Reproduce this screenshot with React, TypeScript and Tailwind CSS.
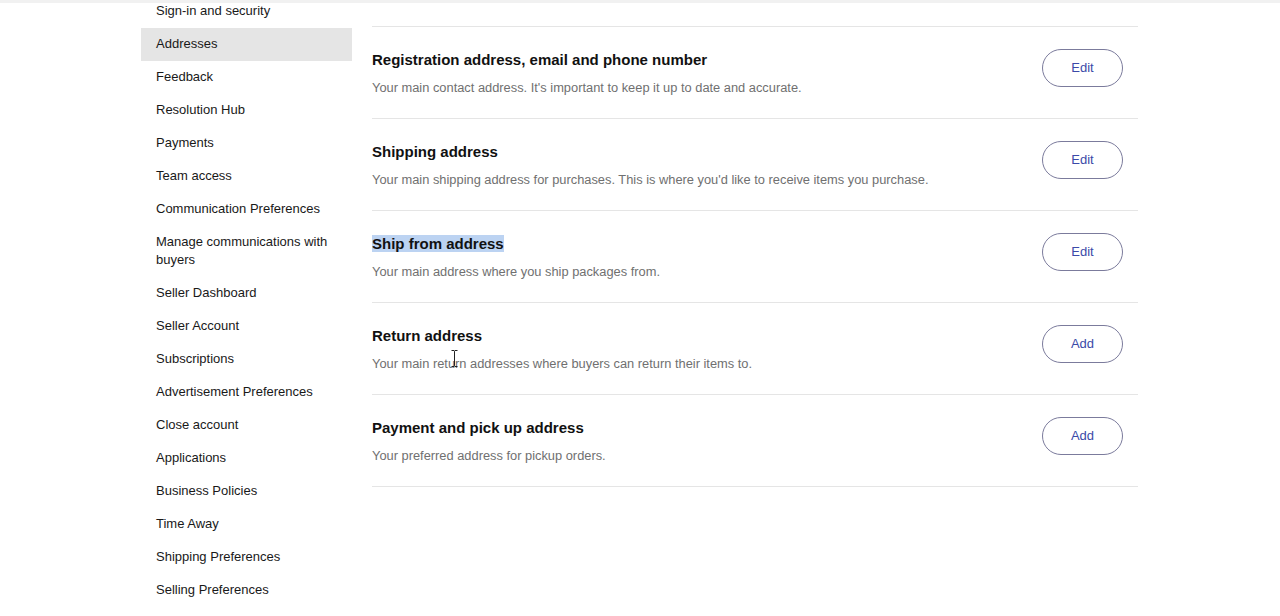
const navItems = [
  'Sign-in and security',
  'Addresses',
  'Feedback',
  'Resolution Hub',
  'Payments',
  'Team access',
  'Communication Preferences',
  'Manage communications with buyers',
  'Seller Dashboard',
  'Seller Account',
  'Subscriptions',
  'Advertisement Preferences',
  'Close account',
  'Applications',
  'Business Policies',
  'Time Away',
  'Shipping Preferences',
  'Selling Preferences',
];

const sections = [
  {
    title: 'Registration address, email and phone number',
    desc: "Your main contact address. It's important to keep it up to date and accurate.",
    action: 'Edit',
  },
  {
    title: 'Shipping address',
    desc: "Your main shipping address for purchases. This is where you'd like to receive items you purchase.",
    action: 'Edit',
  },
  {
    title: 'Ship from address',
    desc: 'Your main address where you ship packages from.',
    action: 'Edit',
    selected: true,
  },
  {
    title: 'Return address',
    desc: 'Your main return addresses where buyers can return their items to.',
    action: 'Add',
  },
  {
    title: 'Payment and pick up address',
    desc: 'Your preferred address for pickup orders.',
    action: 'Add',
  },
];

export default function App() {
  return (
    <main className="relative h-[616px] overflow-hidden bg-white font-['Liberation_Sans',Arial,sans-serif] text-[#191919]">
      <div className="h-[3px] w-full bg-[#f1f1f1]" />

      <div className="mx-auto flex w-[998px] gap-5">
        <nav className="-mt-[8.5px] w-[211px] shrink-0">
          {navItems.map((item) => (
            <div
              key={item}
              className={`px-[15px] py-[7.5px] text-[13px] leading-[18px] ${
                item === 'Addresses' ? 'bg-[#e5e5e5]' : ''
              }`}
            >
              {item}
            </div>
          ))}
        </nav>

        <section className="mt-[23px] w-[766px]">
          {sections.map((s) => (
            <div
              key={s.title}
              className="flex items-start justify-between border-t border-[#e5e5e5] pr-[15px]"
            >
              <div className="pt-[23px] pb-[21px]">
                <h2 className="text-[15px] font-bold leading-[20px] text-[#111]">
                  <span className={s.selected ? 'bg-[#bcd3f2]' : ''}>{s.title}</span>
                </h2>
                <p className="mt-[9px] text-[12.85px] leading-[18px] text-[#707070]">
                  {s.desc}
                </p>
              </div>
              <button className="mt-[22px] h-[38px] w-[81px] rounded-full border border-[#7b7b9c] text-[13px] text-[#3b4aa8]">
                {s.action}
              </button>
            </div>
          ))}
          <div className="border-t border-[#e5e5e5]" />
        </section>
      </div>

      {/* text cursor */}
      <svg
        className="pointer-events-none absolute left-[451px] top-[350px]"
        width="7"
        height="17"
        viewBox="0 0 7 17"
      >
        <path d="M0.5 0.5h2.5l0.5 1 0.5-1h2.5M3.5 1.5v14M0.5 16.5h2.5l0.5-1 0.5 1h2.5" fill="none" stroke="#222" strokeWidth="1" />
      </svg>
    </main>
  );
}
